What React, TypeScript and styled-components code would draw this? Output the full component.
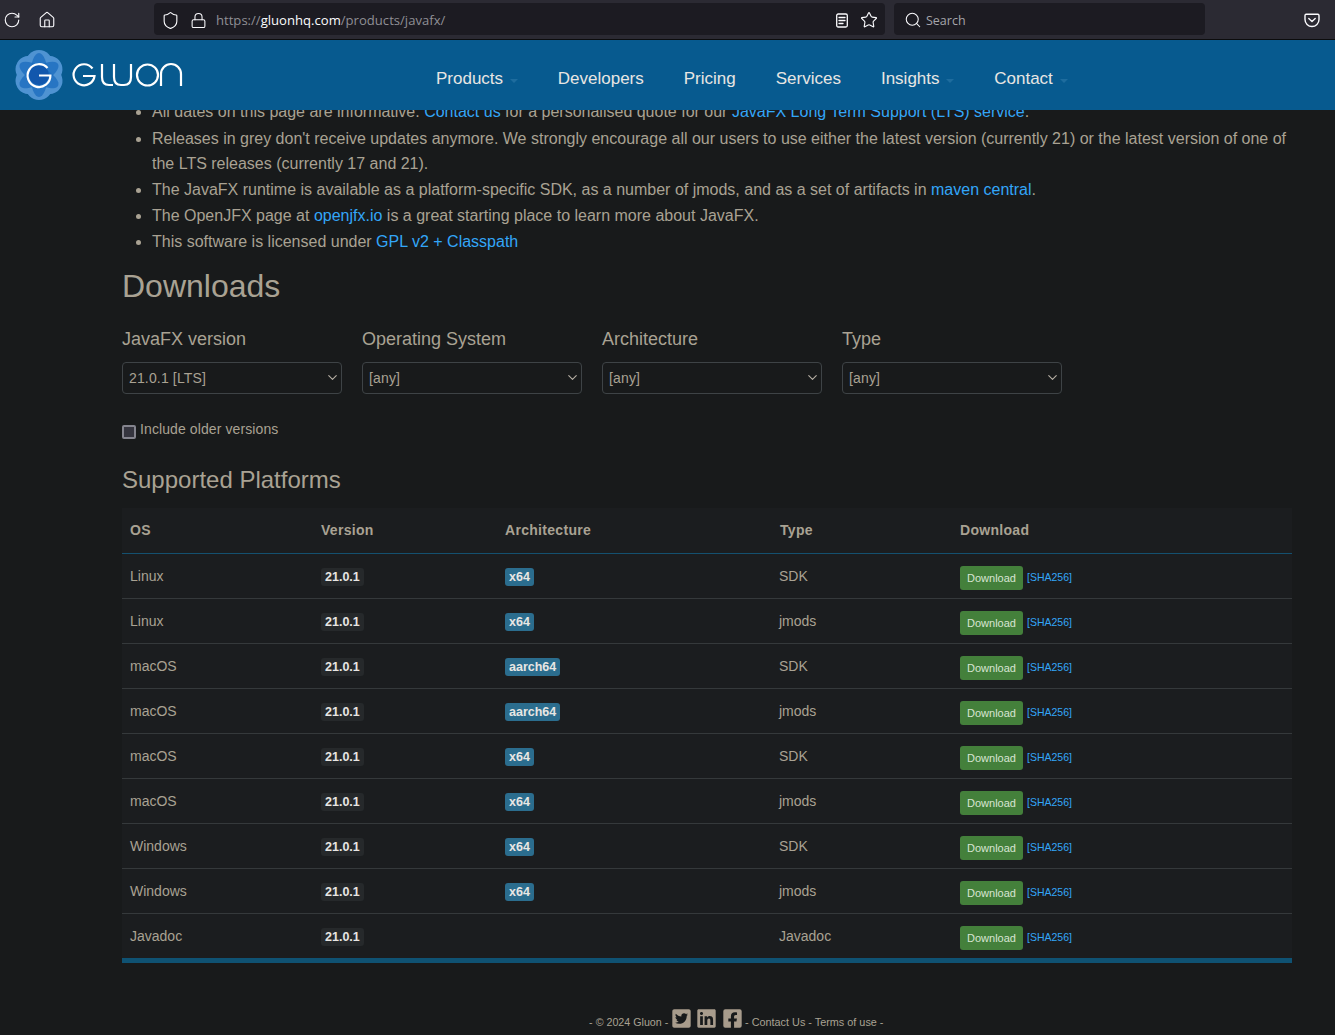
import React from "react";
import styled, { createGlobalStyle } from "styled-components";
import { RotateCw, Home, Shield, Lock, Star, Search, ChevronDown } from "lucide-react";
import { FaTwitterSquare, FaLinkedin, FaFacebookSquare } from "react-icons/fa";

const Global = createGlobalStyle`
  html, body { margin: 0; padding: 0; background: #181a1b; overflow: hidden; height: 1035px; }
  * { box-sizing: border-box; }
  body { font-family: "Liberation Sans", Arial, sans-serif; color: #a9a293; }
  a { color: #33a6f8; text-decoration: none; }
`;

const Page = styled.div`
  width: 1335px;
  height: 1035px;
  overflow: hidden;
  display: flex;
  flex-direction: column;
`;

const Chrome = styled.div`
  height: 40px;
  flex: none;
  background: #2b2a33;
  border-bottom: 1px solid #0c0c0d;
  display: flex;
  align-items: center;
  color: #fbfbfe;
  padding: 0 0 1px 0;
`;

const ChromeBtn = styled.div<{ $w: number }>`
  width: ${(p) => p.$w}px;
  flex: none;
  display: flex;
  align-items: center;
  justify-content: center;
  padding-top: 2px;
`;

const UrlBar = styled.div`
  margin-left: 84px;
  width: 731px;
  height: 32px;
  background: #1c1b22;
  border-radius: 4px;
  display: flex;
  align-items: center;
  padding: 2px 7px 0 6.5px;
  flex: none;
`;

const UrlText = styled.div`
  font-family: "Open Sans", "Noto Sans", sans-serif;
  font-size: 13.1px;
  color: #8f8f95;
  margin-left: 9.5px;
  flex: 1;
  white-space: nowrap;
  b { font-weight: 400; color: #fbfbfe; }
`;

const UrlIcons = styled.div`
  display: flex;
  align-items: center;
  gap: 11.5px;
`;

const UrlLead = styled.div`
  display: flex;
  align-items: center;
  gap: 10px;
`;

const SearchBar = styled.div`
  margin-left: 9px;
  width: 311px;
  height: 32px;
  background: #1c1b22;
  border-radius: 4px;
  display: flex;
  align-items: center;
  padding: 2px 0 0 9.5px;
  gap: 4.5px;
  font-family: "Open Sans", "Noto Sans", sans-serif;
  font-size: 12.5px;
  color: #a5a5ab;
  flex: none;
`;

const PocketSlot = styled.div`
  margin-left: 99px;
  padding-top: 2px;
  display: flex;
`;

const Nav = styled.nav`
  height: 70px;
  flex: none;
  background: #075a8f;
  display: flex;
  align-items: center;
  position: relative;
  z-index: 2;
  padding-left: 13px;
`;

const LogoSvg = styled.svg`
  width: 172px;
  height: 52px;
  flex: none;
`;

const NavList = styled.div`
  margin-left: 251px;
  margin-top: 8px;
  display: flex;
  gap: 40px;
  font-size: 17px;
  color: #e8e6e3;
`;

const NavItem = styled.div`
  display: flex;
  align-items: center;
  white-space: nowrap;
`;

const Caret = styled.span`
  width: 0;
  height: 0;
  margin-left: 6.7px;
  margin-top: 3px;
  border-left: 4px solid transparent;
  border-right: 4px solid transparent;
  border-top: 4px solid #1e6c9e;
`;

const Main = styled.main`
  margin-top: -11px;
  padding: 0 43px 0 122px;
  flex: 1;
  background: #181a1b;
`;

const Notes = styled.ul`
  margin: 0;
  padding: 0 0 0 30px;
  font-size: 16px;
  line-height: 25.6px;
  color: #a9a293;
  li { margin-bottom: 0.4px; }
  li:first-child { margin-bottom: 1px; }
  li::marker { color: #a9a293; }
`;

const H1 = styled.h1`
  margin: 11px 0 0;
  font-size: 32px;
  font-weight: 400;
  line-height: 40px;
  color: #a9a293;
`;

const Filters = styled.div`
  margin-top: 22px;
  display: flex;
  gap: 20px;
`;

const Filter = styled.div`
  width: 220px;
`;

const FilterLabel = styled.div`
  font-size: 18px;
  line-height: 22px;
  color: #a9a293;
  margin-bottom: 12px;
`;

const SelectWrap = styled.div`
  position: relative;
  height: 32px;
  color: #b5afa4;
  svg {
    position: absolute;
    right: 2.5px;
    top: 8.5px;
    pointer-events: none;
  }
`;

const Select = styled.select`
  appearance: none;
  width: 100%;
  height: 32px;
  background: #181a1b;
  border: 1px solid #3e4346;
  border-radius: 4px;
  padding: 0 6px;
  font-family: "Liberation Sans", Arial, sans-serif;
  font-size: 14px;
  letter-spacing: 0.15px;
  color: #a9a293;
`;

const CheckRow = styled.label`
  display: flex;
  align-items: flex-start;
  margin-top: 26px;
  font-size: 14px;
  letter-spacing: 0.1px;
  line-height: 18px;
  height: 18px;
  color: #a9a293;
`;

const Box = styled.span`
  width: 14px;
  height: 14px;
  flex: none;
  margin-top: 5px;
  margin-right: 4px;
  background: #35353f;
  border: 2px solid #84848e;
  border-radius: 2px;
`;

const H2 = styled.h2`
  margin: 27px 0 0;
  font-size: 24px;
  font-weight: 400;
  line-height: 30px;
  color: #a9a293;
`;

const Table = styled.table`
  margin-top: 13px;
  width: 1170px;
  border-collapse: collapse;
  table-layout: fixed;
  background: #1b1d1f;
  border-bottom: 5px solid #0f5273;
`;

const Th = styled.th<{ $w: number }>`
  width: ${(p) => p.$w}px;
  height: 46px;
  padding: 0 8px;
  text-align: left;
  font-size: 14px;
  font-weight: 700;
  letter-spacing: 0.3px;
  color: #a9a293;
  border-bottom: 1px solid #14506f;
`;

const Td = styled.td<{ $inset?: number }>`
  height: 45px;
  padding: 0 8px 0 ${(p) => p.$inset ?? 8}px;
  font-size: 14px;
  color: #a9a293;
  border-bottom: 1px solid #35393b;
  white-space: nowrap;
`;

const Row = styled.tr`
  &:last-child td { border-bottom: 0; height: 47px; }
`;

const VersionTag = styled.span`
  display: inline-block;
  padding: 0 4px;
  height: 18px;
  line-height: 18px;
  border-radius: 3px;
  background: #26292b;
  color: #e8e6e3;
  font-size: 12.5px;
  font-weight: 700;
  vertical-align: -2px;
`;

const ArchTag = styled(VersionTag)`
  background: #2b6d8e;
`;

const DownloadBtn = styled.a`
  display: inline-block;
  width: 63px;
  height: 24px;
  line-height: 24px;
  text-align: center;
  background: #44803b;
  border-radius: 3px;
  color: #d8e4d3;
  font-size: 11px;
  vertical-align: middle;
  margin-top: 3px;
`;

const Sha = styled.a`
  display: inline-block;
  margin: 2px 0 0 4px;
  font-size: 10.5px;
  vertical-align: middle;
`;

const Footer = styled.footer`
  margin-top: 51px;
  padding-left: 58.6px;
  display: flex;
  justify-content: center;
  align-items: center;
  width: 1170px;
  font-size: 10.7px;
  color: #a9a293;
  white-space: nowrap;
`;

const FooterLinks = styled.span`
  font-size: 10.85px;
`;

const Social = styled.a`
  display: flex;
  color: #a89c8c;
  margin: -6px 2.3px 0;
`;

const petals = [0, 60, 120, 180, 240, 300];

const Logo = () => (
  <LogoSvg viewBox="0 0 172 52">
    <g transform="translate(26 26)">
      {petals.map((a) => (
        <circle key={a} r="13.500" cy="-11.500" transform={`rotate(${a})`} fill="#4f93d2" />
      ))}
      {[0, 60, 120].map((a) => (
        <ellipse key={a} rx="8.500" ry="22" transform={`rotate(${a})`} fill="#1a6bbd" fillOpacity="0.75" />
      ))}
      <circle r="10" fill="#1257ad" />
      <path d="M8.500 -7A11.400 11.400 0 1 0 11.400 0.500H0" fill="none" stroke="#fff" strokeWidth="2.200" />
    </g>
    <g fill="none" stroke="#fff" strokeWidth="2.200">
      <path d="M79.500 19.500A10.500 10.500 0 1 0 81.500 27H70" />
      <path d="M89 15V28Q89 36 96 36H100" />
      <path d="M101 15V28Q101 36 108 36H111Q118 36 118 28V15" />
      <circle cx="134.500" cy="26" r="10.500" />
      <path d="M148 37V25A10 10 0 0 1 168 25V37" />
    </g>
  </LogoSvg>
);

const Pocket = () => (
  <svg width="16" height="16" viewBox="0 0 16 16" fill="none" stroke="#fbfbfe" strokeWidth="1.400">
    <path d="M2 2.200H14A1.300 1.300 0 0 1 15 3.500V7.500A7 7 0 0 1 1 7.500V3.500A1.300 1.300 0 0 1 2 2.200Z" />
    <path d="M4.800 6.500L8 9.500L11.200 6.500" strokeLinecap="round" strokeLinejoin="round" />
  </svg>
);

const Reader = () => (
  <svg width="14" height="15" viewBox="0 0 14 15" fill="none" stroke="#fbfbfe" strokeWidth="1.300">
    <rect x="1.700" y="1" width="10.600" height="13" rx="1.500" />
    <path d="M4 4.500H10M4 7.500H10M4 10.500H8" strokeLinecap="round" />
  </svg>
);

const rows: [string, string, string][] = [
  ["Linux", "x64", "SDK"],
  ["Linux", "x64", "jmods"],
  ["macOS", "aarch64", "SDK"],
  ["macOS", "aarch64", "jmods"],
  ["macOS", "x64", "SDK"],
  ["macOS", "x64", "jmods"],
  ["Windows", "x64", "SDK"],
  ["Windows", "x64", "jmods"],
  ["Javadoc", "", "Javadoc"],
];

const filters: [string, string][] = [
  ["JavaFX version", "21.0.1 [LTS]"],
  ["Operating System", "[any]"],
  ["Architecture", "[any]"],
  ["Type", "[any]"],
];

export default function App() {
  return (
    <Page>
      <Global />
      <Chrome>
        <ChromeBtn $w={23}><RotateCw size={18} strokeWidth={1.500} /></ChromeBtn>
        <ChromeBtn $w={47}><Home size={18} strokeWidth={1.500} /></ChromeBtn>
        <UrlBar>
          <UrlLead>
            <Shield size={19} strokeWidth={1.400} />
            <Lock size={17} strokeWidth={1.500} />
          </UrlLead>
          <UrlText>https://<b>gluonhq.com</b>/products/javafx/</UrlText>
          <UrlIcons>
            <Reader />
            <Star size={18} strokeWidth={1.500} />
          </UrlIcons>
        </UrlBar>
        <SearchBar><Search size={18} strokeWidth={1.400} color="#fbfbfe" />Search</SearchBar>
        <PocketSlot><Pocket /></PocketSlot>
      </Chrome>
      <Nav>
        <Logo />
        <NavList>
          <NavItem>Products<Caret /></NavItem>
          <NavItem>Developers</NavItem>
          <NavItem>Pricing</NavItem>
          <NavItem>Services</NavItem>
          <NavItem>Insights<Caret /></NavItem>
          <NavItem>Contact<Caret /></NavItem>
        </NavList>
      </Nav>
      <Main>
        <Notes>
          <li>All dates on this page are informative. <a href="#c">Contact us</a> for a personalised quote for our <a href="#l">JavaFX Long Term Support (LTS) service</a>.</li>
          <li>Releases in grey don't receive updates anymore. We strongly encourage all our users to use either the latest version (currently 21) or the latest version of one of the LTS releases (currently 17 and 21).</li>
          <li>The JavaFX runtime is available as a platform-specific SDK, as a number of jmods, and as a set of artifacts in <a href="#m">maven central</a>.</li>
          <li>The OpenJFX page at <a href="#o">openjfx.io</a> is a great starting place to learn more about JavaFX.</li>
          <li>This software is licensed under <a href="#g">GPL v2 + Classpath</a></li>
        </Notes>
        <H1>Downloads</H1>
        <Filters>
          {filters.map(([label, value]) => (
            <Filter key={label}>
              <FilterLabel>{label}</FilterLabel>
              <SelectWrap>
                <Select defaultValue={value}><option>{value}</option></Select>
                <ChevronDown size={15} strokeWidth={1.800} />
              </SelectWrap>
            </Filter>
          ))}
        </Filters>
        <CheckRow><Box />Include older versions</CheckRow>
        <H2>Supported Platforms</H2>
        <Table>
          <thead>
            <tr>
              <Th $w={191}>OS</Th>
              <Th $w={184}>Version</Th>
              <Th $w={275}>Architecture</Th>
              <Th $w={180}>Type</Th>
              <Th $w={340}>Download</Th>
            </tr>
          </thead>
          <tbody>
            {rows.map(([os, arch, type], i) => (
              <Row key={i}>
                <Td>{os}</Td>
                <Td><VersionTag>21.0.1</VersionTag></Td>
                <Td>{arch && <ArchTag>{arch}</ArchTag>}</Td>
                <Td $inset={7}>{type}</Td>
                <Td><DownloadBtn href="#d">Download</DownloadBtn><Sha href="#s">[SHA256]</Sha></Td>
              </Row>
            ))}
          </tbody>
        </Table>
        <Footer>
          <span>- © 2024 Gluon -</span>
          <Social href="#t"><FaTwitterSquare size={21} /></Social>
          <Social href="#i"><FaLinkedin size={21} /></Social>
          <Social href="#f"><FaFacebookSquare size={21} /></Social>
          <FooterLinks>- Contact Us - Terms of use -</FooterLinks>
        </Footer>
      </Main>
    </Page>
  );
}
